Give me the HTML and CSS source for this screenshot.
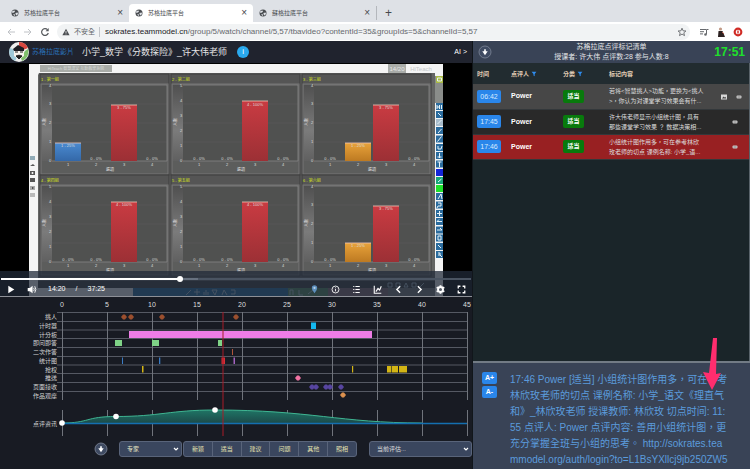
FILE: index.html
```html
<!DOCTYPE html>
<html lang="zh-Hant">
<head>
<meta charset="utf-8">
<meta name="viewport" content="width=device-width, initial-scale=1">
<title>苏格拉底平台</title>
<link rel="stylesheet" href="styles.css">
</head>
<body>
<svg class="defs" aria-hidden="true">
  <defs>
    <symbol id="globe" viewBox="0 0 16 16"><circle cx="8" cy="8" r="7" fill="#4a4d51"/><path d="M3 4l4-1 1 2-2 2-3 1-1-2zM9 8l4-1 1 2-2 4-2-1-1-2zM5 10l3 1v3l-3-2z" fill="#dee1e6"/></symbol>
    <symbol id="down" viewBox="0 0 14 14"><circle cx="7" cy="7" r="6" fill="#3f4b62" stroke="#7d8798" stroke-width=".8"/><path d="M7 4.200v3M5.800 7L7 8.800 8.200 7z" fill="#fff" stroke="#fff" stroke-width="1.600"/></symbol>
    <symbol id="filter" viewBox="0 0 8 8"><path d="M.8 1h6.400L4.900 4v3L3.300 6V4z" fill="#2f8df0"/></symbol>
    <symbol id="link" viewBox="0 0 8 8"><rect x="1.500" y="2.500" width="5" height="3" rx="1" fill="#c9c9c9"/><path d="M2.500 4h3" stroke="#666" stroke-width=".6"/></symbol>
    <linearGradient id="red" x2="0" y2="1"><stop offset="0" stop-color="#c93b42"/><stop offset="1" stop-color="#9c3035"/></linearGradient>
    <linearGradient id="blue" x2="0" y2="1"><stop offset="0" stop-color="#4a8ad0"/><stop offset="1" stop-color="#3468a8"/></linearGradient>
    <linearGradient id="orange" x2="0" y2="1"><stop offset="0" stop-color="#e8a23a"/><stop offset="1" stop-color="#bd7a22"/></linearGradient>
    <linearGradient id="side" x2="0" y2="1"><stop offset="0" stop-color="#505050"/><stop offset=".6" stop-color="#7b7b7b"/><stop offset="1" stop-color="#606060"/></linearGradient>
    <linearGradient id="area" x2="0" y2="1"><stop offset="0" stop-color="#1f7565"/><stop offset="1" stop-color="#1c4a4a"/></linearGradient>
    <g id="panel">
      <rect x="0" y="0" width="129" height="101" fill="#555" stroke="#3f3f3f"/>
      <rect x="1" y="10" width="127" height="90" fill="#5c5d5c" stroke="#777"/>
      <rect x="2" y="11" width="10" height="76" fill="url(#side)"/>
      <rect x="12" y="11" width="115" height="76" fill="#505150"/>
      <path d="M12 30h115M12 49h115M12 68h115" stroke="#5a5b5a" stroke-width=".6"/>
      <path d="M12 11h115v76H12" fill="none" stroke="#858585" stroke-width=".8"/>
      <g class="tick"><text x="28" y="92">1</text><text x="56" y="92">2</text><text x="84" y="92">3</text><text x="112" y="92">4</text><text x="70" y="97">選項</text><text x="112" y="86">0 - 0%</text><text transform="translate(6 48) rotate(-90)">人數</text></g>
    </g>
    <g id="axis4" class="tick"><text x="10" y="88">0</text><text x="10" y="69">1</text><text x="10" y="50">2</text><text x="10" y="31">3</text><text x="10" y="13">4</text></g>
    <g id="axis5" class="tick"><text x="10" y="88">0</text><text x="10" y="73">1</text><text x="10" y="58">2</text><text x="10" y="43">3</text><text x="10" y="28">4</text><text x="10" y="13">5</text></g>
    <path id="dia" d="M-3 0L-1-2.500H1L3 0L1 2.500H-1z"/>
  </defs>
</svg>

<header class="browser">
  <div class="tabs">
    <div class="tab"><svg><use href="#globe"/></svg><span>苏格拉底平台</span><button aria-label="关闭标签">×</button></div>
    <div class="tab active"><svg><use href="#globe"/></svg><span>苏格拉底平台</span><button aria-label="关闭标签">×</button></div>
    <div class="tab last"><svg><use href="#globe"/></svg><span>蘇格拉底平台</span><button aria-label="关闭标签">×</button></div>
    <button class="newtab" aria-label="新标签">+</button>
  </div>
  <div class="toolbar">
    <button aria-label="后退"><svg viewBox="0 0 10 10"><path d="M9 5H2M5 2L2 5l3 3" stroke="#bfc2c6"/></svg></button>
    <button aria-label="前进"><svg viewBox="0 0 10 10"><path d="M1 5h7M5 2l3 3-3 3" stroke="#bfc2c6"/></svg></button>
    <button aria-label="刷新"><svg viewBox="0 0 10 10"><path d="M8.300 6A3.400 3.400 0 1 1 7.500 2.700" stroke="#55585c" stroke-width="1.200"/><path d="M8.700 1v3.200H5.500z" fill="#55585c"/></svg></button>
    <div class="address">
      <svg viewBox="0 0 10 10"><path d="M5 1l4.500 8h-9z" fill="#4b4e52"/><path d="M5 3.800v2.600M5 7v1" stroke="#f1f3f4"/></svg>
      <span class="unsafe">不安全</span>
      <span class="url"><b>sokrates.teammodel.cn</b>/group/5/watch/channel/5,57/tbavideo?contentId=35&amp;groupIds=5&amp;channelId=5,57</span>
      <button aria-label="收藏"><svg viewBox="0 0 10 10"><path d="M5 1.200l1.100 2.600 2.800.2-2.100 1.800.7 2.800L5 7.100 2.500 8.600l.7-2.800L1.100 4l2.800-.2z" stroke="#55585c" stroke-width=".8"/></svg></button>
    </div>
    <div class="extras">
      <button aria-label="媒体"><svg viewBox="0 0 10 10"><path d="M1 2.500h6M1 4.700h4M1 6.900h3M7.500 7V2.500h2" stroke="#66696d"/><circle cx="6.500" cy="7.500" r="1.300" fill="#66696d"/></svg></button>
      <button aria-label="用户"><svg viewBox="0 0 10 10"><circle cx="4.500" cy="2" r="1.600" fill="#c29a86"/><path d="M2.500 4h4l2.500 6H2z" fill="#2b2020"/><path d="M6 5l2 2" stroke="#b65b4c"/></svg></button>
      <button aria-label="更新"><svg viewBox="0 0 10 10"><circle cx="5" cy="5" r="4.400" fill="#d02b25"/><circle cx="5" cy="5" r="2.300" fill="#fff"/><path d="M5 3.500v3" stroke="#d02b25" stroke-width="1.400"/></svg></button>
    </div>
  </div>
</header>

<main class="app">
  <section class="left">
    <div class="title">
      <svg class="logo" viewBox="0 0 22 22"><circle cx="11" cy="11" r="10" fill="#eee"/><path d="M11 1a10 10 0 0 1 9 6l-5 2-4-4z" fill="#d8473f"/><path d="M20 8a10 10 0 0 1-6 12l-1-3 4-7z" fill="#7fc06b"/><path d="M2 7a10 10 0 0 0 5 13l2-4-4-8z" fill="#9fc9d8"/><path d="M5 8l5-4 6 3v3H6z" fill="#1c1c22"/><path d="M6 10h10v5l-5 3-5-3z" fill="#f8f4ee"/><path d="M7 11h3M12 11h3M8 15c2-1 4-1 6 0l-3 3z" stroke="#222" fill="#222"/></svg>
      <a href="#">苏格拉底影片</a>
      <h1>小学_数学《分数探险》_许大伟老师</h1>
      <button class="info" aria-label="信息">i</button>
      <button class="ai">AI &gt;</button>
    </div>

    <div class="video">
      <svg class="frame" viewBox="0 63 472 234" role="img" aria-label="统计图画面">
        <rect y="63" width="472" height="234" fill="#000"/>
        <rect x="29" y="64" width="414" height="233" fill="#f4f4f4"/>
        <rect x="40" y="65" width="72" height="7" fill="#a9aca8"/>
        <text class="tick pale" x="76" y="70">HiTeach 智慧課堂 互動教學系統</text>
        <rect x="388" y="64" width="18" height="9" fill="#a9aca9"/>
        <text class="page" x="397" y="71">14/20</text><text class="page grey" x="421" y="71">HiTeach</text>
        <path d="M39 73h396v208H38V75z" fill="#646564"/>
        <path d="M38 281h397v7H38z" fill="#3a3a3a"/>
        <path d="M288 288h147v9H288z" fill="#777"/>
        <rect x="435" y="76" width="8" height="27" fill="#8a8d8a"/>
        <use href="#panel" x="40" y="74"/><use href="#panel" x="171" y="74"/><use href="#panel" x="302" y="74"/>
        <use href="#panel" x="40" y="175"/><use href="#panel" x="171" y="175"/><use href="#panel" x="302" y="175"/>
        <use href="#axis4" x="40" y="74"/><use href="#axis5" x="171" y="74"/><use href="#axis4" x="302" y="74"/>
        <use href="#axis5" x="40" y="175"/><use href="#axis5" x="171" y="175"/><use href="#axis4" x="302" y="175"/>
        <g class="group"><text x="41" y="81">1 - 第一組</text><text x="172" y="81">2 - 第二組</text><text x="303" y="81">3 - 第三組</text><text x="41" y="182">4 - 第四組</text><text x="172" y="182">5 - 第五組</text><text x="303" y="182">6 - 第六組</text></g>
        <rect x="55" y="143" width="26" height="18" fill="url(#blue)"/>
        <g fill="url(#orange)"><rect x="345" y="143" width="26" height="18"/><rect x="345" y="243" width="26" height="19"/></g>
        <g fill="url(#red)"><rect x="111" y="105" width="26" height="56"/><rect x="242" y="101" width="26" height="60"/><rect x="373" y="105" width="26" height="56"/><rect x="111" y="202" width="26" height="60"/><rect x="242" y="202" width="26" height="60"/><rect x="373" y="206" width="26" height="56"/></g>
        <path d="M55 143h26M345 143h26M345 243h26M111 105h26M242 101h26M373 105h26M111 202h26M242 202h26M373 206h26" stroke="#f0c8b8" stroke-width=".8"/>
        <g class="tick"><text x="68" y="147">1 - 25%</text><text x="124" y="109">3 - 75%</text><text x="255" y="106">4 - 100%</text><text x="358" y="147">1 - 25%</text><text x="386" y="109">3 - 75%</text><text x="124" y="206">4 - 100%</text><text x="255" y="206">4 - 100%</text><text x="386" y="210">3 - 75%</text><text x="358" y="247">1 - 25%</text>
        <text x="96" y="160">0 - 0%</text><text x="199" y="160">0 - 0%</text><text x="227" y="160">0 - 0%</text><text x="330" y="160">0 - 0%</text><text x="68" y="261">0 - 0%</text><text x="96" y="261">0 - 0%</text><text x="199" y="261">0 - 0%</text><text x="227" y="261">0 - 0%</text><text x="330" y="261">0 - 0%</text></g>
        <g fill="#2b6c9e"><path d="M436 103h7v7h-7zM436 111h7v7h-7zM436 127h7v7h-7zM436 135.500h7v7h-7zM436 144h7v7h-7zM436 152h7v7h-7zM436 160.500h7v7h-7zM436 193h7v7h-7zM436 201.500h7v7h-7zM436 210h7v7h-7zM436 218h7v7h-7zM436 226.500h7v7h-7zM436 234.500h7v7h-7zM436 243h7v7h-7zM436 251h7v7h-7z"/></g>
        <path d="M436 119h7v7h-7z" fill="#a8bccb"/><path d="M436 169h7v7h-7z" fill="#1525d8"/><path d="M436 177h7v7h-7z" fill="#18a87a"/><path d="M436 185h7v7h-7z" fill="#1fe02c"/><path d="M436 76h7v7h-7z" fill="#a9bb45"/>
        <path d="M437.500 81v-3h4v3zM437 105v4M439.500 105v4M437 107h2.500M441.500 105v4M438 113l3 3M437.500 124l4-4M438 133l3.500-4M437.500 141.500l4-5M438 146v3h3l1-3M437.500 157h4M439.500 153v5M437.500 162h4M439.500 162v5M438 182l3.500-3M438 199l3-5 1 5M438 203h3v3h-3l-1 2M437 213.500h5M439.500 211v5M437 221.500h5M437 221.500l2-2M437 230h5l-2-2M438 236h3v4h-3zM438 245l3 3M438 253h2v2h-2M440 255l2 2" fill="none" stroke="#e8f3f7" stroke-width="1"/>
        <g><rect x="30" y="156" width="5" height="4" fill="#91abb7"/><path d="M30 166h5l-2-2zM30 171h5v4h-5zM30 178h5v4h-5z" fill="#555"/><circle cx="32.500" cy="173" r="1" fill="#fff"/><rect x="30" y="186" width="5" height="4" fill="#a9a9a9"/><rect x="30" y="193" width="5" height="4" fill="#b9b9b9"/><path d="M32 187v2l2-1z" fill="#333"/></g>
        <rect x="133" y="288" width="155" height="9" fill="#26699a"/><rect x="288" y="288" width="40" height="9" fill="#53875d"/><rect x="328" y="288" width="60" height="9" fill="#856a70"/>
        <path d="M186 295l5-5M194 292h6M197 289v6M204 295v-3M206 295v-5M208 295v-3M212 290h5l-2 5zM222 295l2-5 3 5M231 290h4v4h-4M290 295v-5h3v5M299 290v5h4M308 294l5-4M388 283h4v4h-4zM396 283h4v4h-4zM404 287l2-4 2 4zM412 283h4v4h-4zM420 287l4-4" fill="none" stroke="#b4c8d5" stroke-width=".9"/>
      </svg>
      <div class="controls">
        <input type="range" min="0" max="100" value="38" aria-label="播放进度">
        <div class="buttons">
          <button aria-label="播放"><svg viewBox="0 0 12 12"><path d="M4 2.500v7L9.500 6z" fill="#fff"/></svg></button>
          <button class="volume" aria-label="音量"><svg viewBox="0 0 12 12"><path d="M2.500 4.500h2L7 2.500v7L4.500 7.500h-2z" fill="#fff"/><path d="M8 4.500q1 1.500 0 3M9 3q2 3 0 6" stroke="#fff" stroke-width=".8"/></svg></button>
          <p class="clock"><span>14:20</span><span>/</span><span>37:25</span></p>
          <button aria-label="标记"><svg viewBox="0 0 12 12"><path d="M6 9.500Q3.500 6.500 3.500 4.500a2.500 2.500 0 0 1 5 0Q8.500 6.500 6 9.500z" fill="#5d8fbd"/><circle cx="6" cy="4.500" r="1" fill="#b8d1e6"/></svg></button>
          <button aria-label="信息"><svg viewBox="0 0 12 12"><circle cx="6" cy="6" r="3.200" stroke="#fff" stroke-width=".8"/><path d="M6 5.500v2.200M6 4v.8" stroke="#fff" stroke-width=".8"/></svg></button>
          <button aria-label="列表"><svg viewBox="0 0 12 12"><path d="M5 3.200h4M5 6h4M5 8.800h4M3 3.200h1M3 6h1M3 8.800h1" stroke="#fff"/></svg></button>
          <button aria-label="图表"><svg viewBox="0 0 12 12"><path d="M3 2.500v7h6.500M4.500 8l2-3 1.500 1.500 1.500-3.500" stroke="#fff"/></svg></button>
          <button aria-label="上一个"><svg viewBox="0 0 12 12"><path d="M7.500 3L4.500 6l3 3" stroke="#fff" stroke-width="1.300"/></svg></button>
          <button aria-label="下一个"><svg viewBox="0 0 12 12"><path d="M4.500 3l3 3-3 3" stroke="#fff" stroke-width="1.300"/></svg></button>
          <button aria-label="设置"><svg viewBox="0 0 12 12"><circle cx="6" cy="6" r="2.300" stroke="#fff" stroke-width="1.800"/><path d="M6 2v1M6 9v1M2.500 4l1 .6M8.500 7.400l1 .6M2.500 8l1-.6M8.500 4.600l1-.6" stroke="#fff" stroke-width="1.700"/></svg></button>
          <button aria-label="全屏"><svg viewBox="0 0 12 12"><path d="M3 5V3h2M7 3h2v2M9 7v2H7M5 9H3V7" stroke="#fff" stroke-width="1.200"/></svg></button>
        </div>
      </div>
    </div>

    <div class="timeline">
      <svg viewBox="0 298 472 140" role="img" aria-label="课堂时间轴">
        <g class="scale"><text x="62" y="307">0</text><text x="107" y="307">5</text><text x="152" y="307">10</text><text x="197" y="307">15</text><text x="242" y="307">20</text><text x="287" y="307">25</text><text x="332" y="307">30</text><text x="377" y="307">35</text><text x="422" y="307">40</text><text x="467" y="307">45</text></g>
        <path class="rows" d="M57 312.500H467M57 321.500H467M57 330H467M57 338.500H467M57 347.500H467M57 356.500H467M57 365H467M57 373.500H467M57 382.500H467M57 391.500H467"/>
        <path class="cols" d="M62.500 312v88M107.500 312v88M152.500 312v88M197.500 312v88M242.500 312v88M287.500 312v88M332.500 312v88M377.500 312v88M422.500 312v88M467.500 312v88M62.500 410v26M107.500 410v26M152.500 410v26M197.500 410v26M242.500 410v26M287.500 410v26M332.500 410v26M377.500 410v26M422.500 410v26M467.500 410v26"/>
        <g class="names"><text x="57" y="319">挑人</text><text x="57" y="328">计时器</text><text x="57" y="337">计分板</text><text x="57" y="345">即问即答</text><text x="57" y="354">二次作答</text><text x="57" y="363">统计图</text><text x="57" y="372">抢权</text><text x="57" y="380">推送</text><text x="57" y="389">页面接收</text><text x="57" y="398">作品观摩</text><text x="57" y="426">点评资讯</text></g>
        <g fill="#9b4f2e"><use href="#dia" x="124" y="317"/><use href="#dia" x="131" y="317"/><use href="#dia" x="162" y="317"/><use href="#dia" x="236" y="317"/></g>
        <rect x="311" y="322.500" width="5" height="6.500" fill="#14b8f0"/>
        <rect x="129" y="331" width="243" height="7" fill="#ee7de6"/>
        <path d="M115 340h7v6h-7zM152 340h7v6h-7zM218 340h4v6h-4z" fill="#7fd387"/>
        <rect x="232" y="349" width="1" height="6" fill="#b0563a"/>
        <path d="M122 357.500h1v6.500h-1zM159 357.500h1.300v6.500H159z" fill="#3b7cc4"/>
        <path d="M221.500 357.500h3.500v6.500h-3.500z" fill="#d92f38"/><rect x="233.500" y="357.500" width="1.500" height="6.500" fill="#a463c0"/>
        <path d="M142 366h1.500v6.500H142zM352 366h1.200v6.500H352zM387 366h4.400v6.500H387zM392 366h6v6.500h-6zM399 366h8v6.500h-8z" fill="#d3b515"/>
        <use href="#dia" x="298" y="378" fill="#f273a3"/>
        <g fill="#5745a0"><use href="#dia" x="312" y="387"/><use href="#dia" x="316" y="387"/><use href="#dia" x="326" y="387"/><use href="#dia" x="330" y="387"/><use href="#dia" x="341" y="387"/></g>
        <use href="#dia" x="343" y="395" fill="#dc914e"/>
        <path d="M62 423C90 423 85 416.500 116 416.500C160 416.500 170 410 215 410C310 410 340 423 422 423z" fill="url(#area)"/>
        <path d="M62 423C90 423 85 416.500 116 416.500C160 416.500 170 410 215 410C310 410 340 423 422 423" fill="none" stroke="#3fb592"/>
        <path d="M62 423.500H467" stroke="#146fb0" stroke-width="1.500"/>
        <path d="M223 312v124" stroke="#a81c28"/>
        <g fill="#fff"><circle cx="62" cy="423" r="2.800"/><circle cx="116" cy="416.500" r="2.800"/><circle cx="215" cy="410" r="2.800"/></g>
      </svg>
      <form class="marking">
        <button type="button" class="round" aria-label="收起"><svg><use href="#down"/></svg></button>
        <select class="role" aria-label="身份"><option>专家</option></select>
        <div class="tags"><button type="button">新颖</button><button type="button">适当</button><button type="button">建议</button><button type="button">问题</button><button type="button">其他</button><button type="button">照相</button></div>
        <select class="review" aria-label="评估"><option>当前评估...</option></select>
      </form>
    </div>
  </section>

  <aside class="right">
    <div class="summary">
      <button class="round" aria-label="下载"><svg><use href="#down"/></svg></button>
      <div class="lesson"><h2>苏格拉底点评标记清单</h2><p>授课者: 许大伟 点评数:28 参与人数:8</p></div>
      <time>17:51</time>
    </div>
    <div class="list">
      <table>
        <colgroup><col class="c-time"><col class="c-who"><col class="c-kind"><col><col class="c-icons"></colgroup>
        <thead><tr><th>时间</th><th>点评人 <svg><use href="#filter"/></svg></th><th>分类 <svg><use href="#filter"/></svg></th><th>标记内容</th><th></th></tr></thead>
        <tbody>
          <tr class="plain"><td><button class="stamp">06:42</button></td><td class="who">Power</td><td><span class="kind">适当</span></td><td>若将&lt;智慧挑人&gt;功能，更换为&lt;挑人<br>&gt;，你认为对课堂学习效果会有什...</td><td class="icons"><svg viewBox="0 0 8 8"><rect x="1" y="1.500" width="6" height="5" fill="#d8d8d8"/><path d="M2 5.500l1.500-2 1 1 .8-.8L6.300 5.500z" fill="#444"/></svg><svg><use href="#link"/></svg></td></tr>
          <tr class="dark"><td><button class="stamp">17:45</button></td><td class="who">Power</td><td><span class="kind">适当</span></td><td>许大伟老师显示小组统计图，具有<br>那些课堂学习效果 ？ 数据决策相...</td><td class="icons"><svg><use href="#link"/></svg></td></tr>
          <tr class="current"><td><button class="stamp">17:46</button></td><td class="who">Power</td><td><span class="kind">适当</span></td><td>小组统计图作用多，可在参考林欣<br>玫老师的切点 课例名称: 小学_语...</td><td class="icons"><svg><use href="#link"/></svg></td></tr>
        </tbody>
      </table>
    </div>
    <div class="detail">
      <div class="zoomers"><button>A+</button><button>A-</button></div>
      <p>17:46 Power [适当] 小组统计图作用多，可在参考<br>林欣玫老师的切点 课例名称: 小学_语文《理直气<br>和》_林欣玫老师 授课教师: 林欣玫 切点时间: 11:<br>55 点评人: Power 点评内容: 善用小组统计图，更<br>充分掌握全班与小组的思考。 http://sokrates.tea<br>mmodel.org/auth/login?to=L1BsYXllcj9jb250ZW5</p>
      <svg class="arrow" viewBox="0 0 18 52" aria-hidden="true"><path d="M10 0h4l-1 36 5-1-9 17L0 34l6 1z" fill="#ff2d6e"/></svg>
    </div>
  </aside>
</main>
</body>
</html>
```
FILE: styles.css
```css
* { box-sizing: border-box; margin: 0; padding: 0; }
body {
  min-height: 100vh;
  display: flex;
  flex-direction: column;
  font-family: "Liberation Sans", "Noto Sans CJK TC", "Noto Sans CJK SC", sans-serif;
  font-size: 7px;
  line-height: 10px;
  background: #181b23;
  color: #fff;
  overflow-x: hidden;
}
button { font: inherit; color: inherit; background: none; border: 0; }
button svg { display: block; fill: none; width: 100%; height: 100%; }
.defs { position: absolute; width: 0; height: 0; }

/* browser chrome */
.tabs { display: flex; align-items: flex-end; height: 22px; background: #dee1e6; color: #45484c; padding-left: 5px; }
.tab { display: flex; align-items: center; gap: 5px; width: 124px; height: 18px; padding: 0 6px; border-radius: 4px 4px 0 0; font-size: 6px; }
.tab svg { width: 8px; height: 8px; }
.tab span { flex: 1; }
.tab button, .newtab { font-size: 10px; }
.tab.active { background: #fff; }
.tab.last { border-right: 1px solid #b4b7bc; border-radius: 0; height: 14px; margin-bottom: 2px; }
.newtab { font-size: 12px; height: 18px; padding: 0 8px; }
.toolbar { display: flex; align-items: center; height: 19px; background: #fff; color: #66696d; padding: 0 6px; }
.toolbar button { width: 10px; height: 10px; margin-right: 7px; }
.address { flex: 1; display: flex; align-items: center; height: 16px; border-radius: 8px; background: #f1f3f4; padding-left: 5px; font-size: 8px; }
.address > svg { width: 8px; height: 8px; margin-right: 4px; }
.address button { margin: 0 3px 0 auto; }
.unsafe { font-size: 7px; padding-right: 4px; border-right: 1px solid #c2c5c9; margin-right: 5px; }
.url { font-family: "Liberation Sans", sans-serif; white-space: nowrap; }
.url b { font-weight: 400; color: #202124; }
.extras { display: flex; padding: 0 1px 0 9px; }
.extras button:last-child { margin-right: 0; }

.app { flex: 1; display: grid; grid-template-columns: 472fr 278fr; }
.left { display: flex; flex-direction: column; min-width: 0; }
.title { display: flex; align-items: center; height: 22px; padding: 0 5px 0 8px; background: #20232e; }
.title a { color: #2a70b8; text-decoration: none; margin: 0 8px 0 2px; }
.title h1 { font-size: 9px; font-weight: 400; color: #e6e6e6; }
.logo { width: 22px; height: 22px; }
.info { width: 12px; height: 12px; border-radius: 50%; background: #2aa9ee; margin-left: 10px; font-size: 8px; }
.ai { margin-left: auto; font-size: 7px; }

/* video */
.video { position: relative; background: #000; }
.frame { display: block; width: 100%; }
.frame text { font-family: "Liberation Sans", "Noto Sans CJK TC", sans-serif; }
.tick { font-size: 4px; fill: #dedede; text-anchor: middle; }
.pale { fill: #d5d7d4; }
.page { font-size: 6px; fill: #e6e6e6; text-anchor: middle; }
.page.grey { fill: #c5c8ca; }
.group { font-size: 4px; fill: #d6e01c; }
.controls { position: absolute; left: 0; right: 0; bottom: 0; height: 26px; padding-top: 5px; background: rgba(33, 42, 56, .74); border-bottom: 1px solid #8d9097; }
.controls input { display: block; appearance: none; width: calc(100% - 2px); height: 6px; margin: 0 1px; background: linear-gradient(90deg, #fff 38%, #67717f 38%, #67717f 42%, #4a5462 42%) center / 100% 2px no-repeat; }
.controls input::-webkit-slider-thumb { appearance: none; width: 6px; height: 6px; border-radius: 50%; background: #fff; }
.buttons { display: flex; align-items: center; height: 14px; gap: 8px; padding: 0 4px; }
.buttons button { width: 13px; height: 13px; }
.clock { flex: 1; display: flex; gap: 10px; padding-left: 2px; }

/* timeline */
.timeline { background: #181b23; flex: 1; padding-top: 1px; }
.timeline > svg { display: block; width: 100%; }
.scale { font-size: 7px; fill: #ddd; text-anchor: middle; }
.names { font-size: 6px; fill: #d3d3d3; text-anchor: end; }
.rows { stroke: #555963; stroke-width: 1; }
.cols { stroke: #70747c; stroke-width: 1; }
.marking { display: flex; align-items: center; padding-top: 3px; padding-left: 94px; }
.round { width: 14px; height: 14px; }
select, .tags { height: 16px; background: #3a465e; border: 1px solid #59647a; border-radius: 3px; }
select { appearance: none; font: inherit; font-size: 6px; color: #e9e7c5; padding: 0 7px; background: #3a465e url("data:image/svg+xml,%3Csvg xmlns='http://www.w3.org/2000/svg' viewBox='0 0 6 6'%3E%3Cpath d='M1 2l2 2 2-2' fill='none' stroke='white' stroke-width='1.2'/%3E%3C/svg%3E") right 2px center / 6px 6px no-repeat; }
.role { width: 63px; margin-left: 11px; }
.tags { display: flex; width: 174px; margin: 0 12px 0 1px; color: #e5e2b0; font-size: 6px; }
.tags button { flex: 1; }
.tags button + button { border-left: 1px solid #59647a; }
.review { flex: 1; color: #ddd; }

/* comments */
.right { display: flex; flex-direction: column; background: #1a2529; min-width: 0; border-left: 1px solid #11161b; }
.summary { display: grid; grid-template-columns: 1fr auto 1fr; align-items: center; height: 22px; padding: 0 5px; background: #394356; }
.lesson { text-align: center; color: #e3e5e8; }
.lesson h2 { font-size: 7px; font-weight: 400; }
.summary time { justify-self: end; font-size: 12px; font-weight: 700; color: #1ee02b; }
.list { flex: 1; border-right: 1px solid #59636a; }
table { width: 100%; border-collapse: collapse; table-layout: fixed; }
th { height: 21px; text-align: left; font-size: 6px; color: #e0cdb5; background: #222c30; white-space: nowrap; }
th svg { width: 6px; height: 6px; vertical-align: middle; }
td { height: 25px; font-size: 6px; color: #ddd; white-space: nowrap; border-bottom: 1px solid #33383b; }
th:first-child, td:first-child { padding-left: 4px; }
.c-time { width: 38px; }
.c-who { width: 52px; }
.c-kind { width: 46px; }
.c-icons { width: 36px; }
.plain { background: #474747; }
.dark { background: #292929; }
.current { background: #982022; }
.stamp { width: 24px; height: 13px; border-radius: 2px; background: #2a86ea; font-size: 7px; line-height: 13px; color: #d8eaff; }
.who { font-size: 7px; font-weight: 700; color: #fff; }
.kind { display: block; width: 21px; line-height: 13px; border-radius: 2px; background: #087a0c; text-align: center; font-weight: 700; color: #fff; }
.icons { text-align: right; }
.icons svg { width: 8px; height: 8px; margin-left: 7px; vertical-align: middle; }
td.icons { padding-right: 10px; }
.detail { position: relative; display: flex; min-height: 108px; padding: 9px 0 0 9px; background: #394356; border-top: 2px solid #727b85; }
.zoomers { width: 28px; display: grid; gap: 2px; align-content: start; }
.zoomers button { width: 15px; height: 12px; border-radius: 2px; background: #2a86ea; font-weight: 700; }
.detail p { font-size: 10px; line-height: 16px; color: #5b9bdc; white-space: nowrap; }
.arrow { position: absolute; right: 29px; top: -25px; width: 18px; height: 52px; }
```
